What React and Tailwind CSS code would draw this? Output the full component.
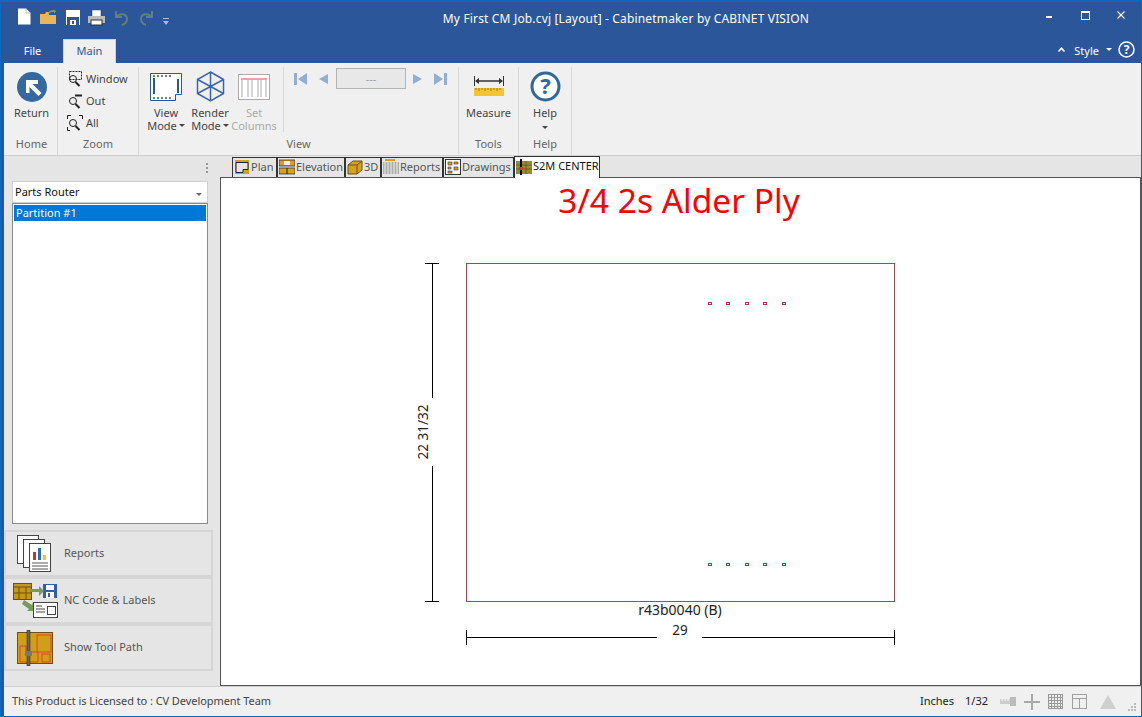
import React from 'react';

const font = { fontFamily: '"Noto Sans", Tahoma, sans-serif' };

function Caret({ className = 'border-t-[#444]' }) {
  return <span className={`inline-block w-0 h-0 border-x-[3px] border-x-transparent border-t-[3px] ${className}`} />;
}

function QuickBar() {
  return (
    <div className="flex items-start self-start pl-[16px] pt-[6px] w-[180px]">
      <svg width="14" height="17" viewBox="0 0 14 17"><path d="M1 .5h8l4.500 4.500v11.500h-12.500z" fill="#fff" /><path d="M9 .5v4.500h4.500" fill="none" stroke="#bbb" /></svg>
      <svg width="18" height="17" viewBox="0 0 18 17" className="ml-[8px]"><path d="M1 16V6h5l1-2h3v3h7v9z" fill="#e9b659" /><path d="M9 5c1-2 3-3 6-3l-1-1 3 2-2 3V4c-2 0-4 0-5 2z" fill="#7ea06a" /></svg>
      <svg width="14" height="15" viewBox="0 0 14 15" className="ml-[9px] mt-[2px]"><rect width="14" height="15" fill="#fff" /><rect x="1" y="7" width="12" height="8" fill="#2b579a" /><rect x="4" y="10" width="6" height="5" fill="#fff" /><rect x="6" y="11" width="2" height="3" fill="#2b579a" /></svg>
      <svg width="17" height="16" viewBox="0 0 17 16" className="ml-[8px] mt-[2px]"><rect x="4" y="0" width="9" height="7" fill="#fff" stroke="#333" strokeWidth=".5" /><rect y="6" width="17" height="7" fill="#bbb" /><rect x="3" y="10" width="11" height="5" fill="#fff" stroke="#333" /></svg>
      <svg width="15" height="16" viewBox="0 0 15 16" fill="none" stroke="#5f8178" strokeWidth="2" className="ml-[9px] mt-[2px]"><path d="M3 7c2-4 10-4 10 2 0 3-2 5-5 6" /><path d="M2 1v6h6" /></svg>
      <svg width="15" height="16" viewBox="0 0 15 16" fill="none" stroke="#5f8178" strokeWidth="2" className="ml-[10px] mt-[2px]"><path d="M12 7C10 3 2 3 2 9c0 3 2 5 5 6" /><path d="M13 1v6H7" /></svg>
      <svg width="6" height="7" viewBox="0 0 6 7" className="ml-[9px] mt-[10px]"><path d="M0 0h6v1H0zM0 3h6L3 7z" fill="#a9bcd8" /></svg>
    </div>
  );
}

function TitleBar() {
  return (
    <div className="h-[37px] flex shrink-0 text-white text-[12px] tracking-[0.16px]">
      <QuickBar />
      <div className="flex-1 text-center pt-[8px] pl-[40px]">My First CM Job.cvj [Layout] - Cabinetmaker by CABINET VISION</div>
      <div className="w-[110px] flex items-start justify-end pr-[2px]">
        <div className="w-[36px] h-[26px] flex items-center justify-center"><span className="w-[6px] h-[2px] bg-white mt-[4px]" /></div>
        <div className="w-[36px] h-[26px] flex items-center justify-center"><span className="w-[9px] h-[9px] border border-white border-t-2" /></div>
        <div className="w-[36px] h-[26px] flex items-center justify-center">
          <svg width="8" height="8" viewBox="0 0 8 8" stroke="#fff" strokeWidth="1.200"><path d="M.5.5l7 7M7.500.5l-7 7" /></svg>
        </div>
      </div>
    </div>
  );
}

function TabRow() {
  return (
    <div className="h-[24px] flex items-end shrink-0 text-[11px] text-white relative">
      <div className="w-[62px] h-[24px] flex items-center justify-center pl-[1px]">File</div>
      <div className="w-[53px] h-[24px] bg-[#f0f0f0] border-x border-t border-[#d2d2d2] text-[#2b579a] flex items-center justify-center">Main</div>
      <div className="flex-1" />
      <div className="flex items-start gap-[6px] pr-[6px] pb-[4px]">
        <svg width="7" height="5" viewBox="0 0 7 5" className="mt-[6px]"><path d="M3.500 0L7 4 6 5 3.500 2.500 1 5 0 4z" fill="#fff" /></svg>
        <span className="mt-[2px] ml-[3px]">Style</span>
        <span className="-mt-[2px] ml-[1px]"><Caret className="border-t-white" /></span>
        <svg width="17" height="17" viewBox="0 0 17 17"><circle cx="8.500" cy="8.500" r="7.500" fill="#2b579a" stroke="#fff" strokeWidth="1.600" /><text x="8.500" y="13" textAnchor="middle" fontSize="12" fontWeight="700" fill="#fff" fontFamily="Noto Sans">?</text></svg>
      </div>
    </div>
  );
}

function Group({ label, width, children }) {
  return (
    <div className="h-[88px] pb-[3px] flex flex-col border-r border-[#d8d8d8] mt-[4px] shrink-0" style={{ width }}>
      <div className="flex-1 flex">{children}</div>
      <div className="h-[16px] text-center text-[11px] text-[#666] leading-[15px]">{label}</div>
    </div>
  );
}

function LargeBtn({ icon, lines, caret, disabled, width = 'w-[44px]' }) {
  return (
    <div className={`${width} flex flex-col items-center pt-[1px] text-[11px] leading-[13px] ${disabled ? 'text-[#aaaaaa]' : 'text-[#444]'}`}>
      <div className="h-[37px] flex items-center justify-center">{icon}</div>
      <div className="text-center mt-[1px] whitespace-nowrap">{lines[0]}</div>
      {lines[1] && <div className="text-center whitespace-nowrap flex items-center gap-[2px]">{lines[1]}{caret && <Caret />}</div>}
      {!lines[1] && caret && <div className="mt-[2px] leading-[8px]"><Caret /></div>}
    </div>
  );
}

function ZoomGlass({ frame }) {
  return (
    <svg width="16" height="16" viewBox="0 0 16 16" fill="none" stroke="#222">
      {frame}
      <circle cx="6" cy="8" r="3.500" strokeWidth="1" />
      <path d="M8.500 11l4 4" strokeWidth="2" />
    </svg>
  );
}

function ZoomRow({ label, frame }) {
  return (
    <div className="flex items-center h-[22px] gap-[3px] text-[11px] text-[#444]">
      <ZoomGlass frame={frame} />
      <span>{label}</span>
    </div>
  );
}

function Ribbon() {
  const blue = '#2b579a';
  return (
    <div className="h-[93px] bg-[#f0f0f0] flex pl-[2px] border-b border-[#d0d0d0] shrink-0 ml-[3px]">
      <Group label="Home" width={52}>
        <LargeBtn width="w-[51px]" lines={['Return']} icon={
          <svg width="30" height="30" viewBox="0 0 30 30"><circle cx="15" cy="15" r="15" fill="#33699f" /><path d="M9 8h12v4h-5.500l9 9-3 3-9-9v6H9z" fill="#fff" /></svg>
        } />
      </Group>
      <Group label="Zoom" width={81}>
        <div className="pl-[9px] pt-[1px] flex flex-col">
          <ZoomRow label="Window" frame={<rect x="2.500" y=".5" width="12" height="8" strokeDasharray="2 1" />} />
          <ZoomRow label="Out" frame={<path d="M8 2.500h7" strokeWidth="2" />} />
          <ZoomRow label="All" frame={<path d="M4 .5H.5V4M12 .5h3.500V4M.5 12v3.500H3" />} />
        </div>
      </Group>
      <Group label="View" width={320}>
        <div className="flex pl-[5px] w-[145px] h-[65px] border-r border-[#d8d8d8]">
          <LargeBtn lines={['View', 'Mode']} caret icon={
            <svg width="32" height="28" viewBox="0 0 32 28"><path d="M.5.5h31v21h-6v6H.5z" fill="#fff" stroke={blue} /><path d="M4 5v16M28 6v14" stroke={blue} strokeWidth="2" /><path d="M3 3h18M3 25h18" stroke={blue} strokeWidth="1.500" strokeDasharray="2 2" /></svg>
          } />
          <LargeBtn lines={['Render', 'Mode']} caret icon={
            <svg width="29" height="31" viewBox="0 0 29 31" fill="none" stroke="#3b64a8" strokeWidth="1.500"><path d="M14.500 1l13 7.500v14l-13 7.500-13-7.500v-14z" /><path d="M14.500 1v29M1.500 8.500l26 14M27.500 8.500l-26 14" /></svg>
          } />
          <LargeBtn lines={['Set', 'Columns']} disabled icon={
            <svg width="32" height="26" viewBox="0 0 32 26" fill="none" stroke="#aaa"><rect x=".5" y=".5" width="31" height="25" fill="#fff" /><path d="M3 5h26" stroke="#e2a79c" strokeWidth="2" /><path d="M4 6v17M10 6v17M14 6v17M20 6v17M23 6v17M28 6v17" /></svg>
          } />
        </div>
        <div className="flex items-start pl-[10px] pt-[1px]">
          <svg width="13" height="12" viewBox="0 0 13 12" fill="#92aed4" className="mt-[5px]"><path d="M0 0h3v12H0zM13 0v12L4 6z" /></svg>
          <svg width="9" height="10" viewBox="0 0 9 10" fill="#92aed4" className="mt-[6px] ml-[12px]"><path d="M9 0v10L0 5z" /></svg>
          <div className="w-[70px] h-[21px] bg-[#e8e8e8] border border-[#b4b4b4] text-[#a0a0a0] text-[11px] text-center leading-[19px] ml-[8px]">---</div>
          <svg width="9" height="10" viewBox="0 0 9 10" fill="#92aed4" className="mt-[6px] ml-[7px]"><path d="M0 0v10l9-5z" /></svg>
          <svg width="13" height="12" viewBox="0 0 13 12" fill="#92aed4" className="mt-[5px] ml-[12px]"><path d="M13 0h-3v12h3zM0 0v12l9-6z" /></svg>
        </div>
      </Group>
      <Group label="Tools" width={60}>
        <LargeBtn width="w-[59px]" lines={['Measure']} icon={
          <svg width="30" height="21" viewBox="0 0 30 21"><path d="M.5 0v10M29.500 0v10" stroke="#333" /><path d="M3 5h24" stroke="#333" strokeWidth="1.500" /><path d="M1 5l4-3v6zM29 5l-4-3v6z" fill="#333" /><rect y="12" width="30" height="8" fill="#f5c433" /><path d="M2 12v2M5 12v3M8 12v2M11 12v3M14 12v2M17 12v3M20 12v2M23 12v3M26 12v2" stroke="#9a7a10" /></svg>
        } />
      </Group>
      <Group label="Help" width={53}>
        <LargeBtn width="w-[52px]" lines={['Help']} caret icon={
          <svg width="31" height="31" viewBox="0 0 31 31"><circle cx="15.500" cy="15.500" r="13.500" fill="#fff" stroke="#2f679f" strokeWidth="3" /><text x="15.500" y="23" textAnchor="middle" fontSize="22" fontWeight="700" fill="#2f679f" fontFamily="Noto Sans">?</text></svg>
        } />
      </Group>
    </div>
  );
}

const tabIconBase = 'w-[16px] h-[16px] shrink-0';

const tabs = [
  { label: 'Plan', width: 'w-[45px]', icon: (
    <svg className={tabIconBase} viewBox="0 0 16 16" fill="none"><rect x="1" y="1" width="14" height="14" fill="#d6a21d" /><path d="M2 3.500h12v7H9v3H2z" fill="#e5e5e5" stroke="#222" /></svg>
  ) },
  { label: 'Elevation', width: 'w-[68px]', icon: (
    <svg className={tabIconBase} viewBox="0 0 16 16"><rect y="1" width="16" height="6" fill="#d6a21d" stroke="#222" strokeWidth=".7" /><rect x="5" y="2" width="6" height="4" fill="#eee" /><rect y="9" width="16" height="6" fill="#d6a21d" stroke="#222" strokeWidth=".7" /><path d="M8 9v6" stroke="#222" /></svg>
  ) },
  { label: '3D', width: 'w-[36px]', icon: (
    <svg className={tabIconBase} viewBox="0 0 16 16"><path d="M1 6l5-4h9v9l-5 4H1z" fill="#d6a21d" stroke="#6b5210" /><path d="M1 6h9v9M10 6l5-4" fill="none" stroke="#6b5210" /></svg>
  ) },
  { label: 'Reports', width: 'w-[62px]', icon: (
    <svg className={tabIconBase} viewBox="0 0 16 16"><rect x="2" y="0" width="10" height="2" fill="#d6a21d" /><path d="M0 4h16M0 6h16M0 8h16M0 10h16M0 12h16M0 14h16" stroke="#777" /><path d="M2 3v12M5 3v12M8 3v12M11 3v12M14 3v12" stroke="#eee" /></svg>
  ) },
  { label: 'Drawings', width: 'w-[71px]', icon: (
    <svg className={tabIconBase} viewBox="0 0 16 16"><rect x=".5" y=".5" width="15" height="15" fill="#fff" stroke="#333" /><rect x="3" y="3" width="4" height="3" fill="#d6a21d" stroke="#333" strokeWidth=".6" /><rect x="9" y="3" width="4" height="2" fill="#d6a21d" stroke="#333" strokeWidth=".6" /><rect x="3" y="8" width="3" height="2" fill="#d6a21d" stroke="#333" strokeWidth=".6" /><rect x="3" y="12" width="4" height="2" fill="#d6a21d" stroke="#333" strokeWidth=".6" /><rect x="9" y="8" width="4" height="3" fill="#d6a21d" stroke="#333" strokeWidth=".6" /></svg>
  ) },
];

function ViewTabs() {
  return (
    <div className="h-[22px] flex items-end pl-[12px] shrink-0 text-[11px]">
      {tabs.map((t) => (
        <div key={t.label} className={`${t.width} h-[21px] pb-[2px] shrink-0 bg-[#e5e5e5] border-x border-t border-[#333] flex items-center gap-[1px] text-[#555] whitespace-nowrap pl-[1px] overflow-hidden`}>
          {t.icon}
          <span>{t.label}</span>
        </div>
      ))}
      <div className="w-[86px] h-[22px] pb-[2px] bg-white border-x border-t border-[#333] flex items-center gap-[1px] text-[#111] whitespace-nowrap pl-[1px] relative z-10">
        <svg className={tabIconBase} viewBox="0 0 16 16"><rect y="2" width="16" height="13" fill="#9b8a2c" /><path d="M0 6h16M0 10h16M5 2v13M10 2v13" stroke="#444" strokeWidth=".6" /><path d="M5 0v16" stroke="#000" strokeWidth="2" /><rect x="3" y="8" width="4" height="3" fill="#d33" /></svg>
        <span>S2M CENTER</span>
      </div>
    </div>
  );
}

function Drawing() {
  const holes = [708, 726, 745, 763, 782];
  return (
    <svg className="block" width="919" height="507" viewBox="221 178 919 507" fontFamily="Noto Sans">
      <text x="679" y="213" textAnchor="middle" fontSize="33.500" fill="#ff0000">3/4 2s Alder Ply</text>
      <rect x="466.500" y="263.500" width="428" height="338" fill="none" stroke="#a04a50" />
      {holes.map((x) => (
        <g key={x} fill="none" stroke="#a5383f">
          <rect x={x + 0.5} y="302.500" width="3" height="2" />
          <rect x={x + 0.5} y="563.500" width="3" height="2" />
        </g>
      ))}
      <g stroke="#000" fill="none">
        <path d="M425 263.500h14M425 601.500h14M432.500 264v134M432.500 466v135" />
        <path d="M466.500 630v15M894.500 630v15M467 637.500h190M702 637.500h192" />
      </g>
      <text transform="translate(428 432) rotate(-90)" textAnchor="middle" fontSize="13.500" fill="#222">22 31/32</text>
      <text x="680" y="615" textAnchor="middle" fontSize="14" fill="#222">r43b0040 (B)</text>
      <text x="680" y="635" textAnchor="middle" fontSize="13.500" fill="#222">29</text>
    </svg>
  );
}

const sideButtons = [
  { label: 'Reports', icon: (
    <svg width="36" height="38" viewBox="0 0 36 38">
      <rect x=".5" y=".5" width="21" height="28" fill="#fff" stroke="#444" />
      <rect x="6.500" y="4.500" width="21" height="28" fill="#fff" stroke="#444" />
      <rect x="12.500" y="8.500" width="21" height="28" fill="#fff" stroke="#444" />
      <rect x="16" y="17" width="3" height="8" fill="#c0392b" /><rect x="21" y="13" width="3" height="12" fill="#2b6cb0" /><rect x="26" y="20" width="3" height="5" fill="#f5c433" />
      <path d="M15 28h16M15 31h16M15 34h16" stroke="#555" />
    </svg>
  ) },
  { label: 'NC Code & Labels', icon: (
    <svg width="45" height="36" viewBox="0 0 45 36">
      <rect x=".5" y=".5" width="18" height="16" fill="#c8961a" stroke="#6b5210" />
      <path d="M0 4h18M0 10h18M6 4v13M13 4v13" stroke="#6b5210" fill="none" />
      <rect x="30" y="1" width="14" height="14" fill="#2f5fa5" /><rect x="33" y="2" width="8" height="5" fill="#fff" /><rect x="33" y="9" width="8" height="6" fill="#fff" /><rect x="35" y="10" width="2" height="4" fill="#2f5fa5" />
      <path d="M17 6h9V3l5 5-5 5V9h-9z" fill="#7a9a5c" />
      <path d="M11 17l8 5 1-3 3 9-9 0 2-2-7-5z" fill="#7a9a5c" />
      <rect x="20.500" y="19.500" width="24" height="15" fill="#fff" stroke="#444" />
      <path d="M23 23h6M23 26h9M23 29h9" stroke="#444" /><rect x="34.500" y="23.500" width="8" height="8" fill="#fff" stroke="#444" />
    </svg>
  ) },
  { label: 'Show Tool Path', icon: (
    <svg width="36" height="36" viewBox="0 0 36 36">
      <rect x=".5" y="2.500" width="35" height="31" fill="#d09f17" stroke="#6b5210" />
      <rect x="20" y="5" width="14" height="17" fill="none" stroke="#dd4433" />
      <rect x="25" y="24" width="8" height="8" fill="none" stroke="#dd4433" />
      <path d="M3 16h6v6h12v10H3z" fill="none" stroke="#dd4433" />
      <rect x="10" y="0" width="3" height="36" fill="#666" stroke="#222" strokeWidth=".5" />
      <rect x="8" y="21" width="7" height="5" fill="#777" />
    </svg>
  ) },
];

function Sidebar() {
  return (
    <div className="w-[210px] shrink-0 bg-[#e5e5e5] flex flex-col">
      <div className="h-[25px] flex justify-end pr-[6px] pt-[7px]">
        <div className="flex flex-col gap-[2px]">
          <span className="w-[2px] h-[2px] bg-[#999]" /><span className="w-[2px] h-[2px] bg-[#999]" /><span className="w-[2px] h-[2px] bg-[#999]" />
        </div>
      </div>
      <div className="ml-[8px] w-[196px] h-[22px] bg-white border border-[#d0d0d0] flex items-center justify-between px-[2px] text-[11px] text-[#111] shrink-0">
        <span>Parts Router</span>
        <span className="pr-[3px]"><Caret className="border-t-[#666]" /></span>
      </div>
      <div className="ml-[8px] w-[196px] h-[321px] bg-white border border-[#8a8a8a] p-[1px] text-[11px] shrink-0">
        <div className="h-[16px] bg-[#0078d7] text-white pl-[2px] leading-[16px]">Partition #1</div>
      </div>
      <div className="mt-[6px] flex flex-col">
        {sideButtons.map((b) => (
          <div key={b.label} className="h-[47px] w-[209px] border-2 border-[#d6d6d6] flex items-center text-[11px] text-[#555] bg-[#e5e5e5]">
            <div className="w-[58px] flex justify-center shrink-0">{b.icon}</div>
            <span>{b.label}</span>
          </div>
        ))}
      </div>
    </div>
  );
}

function StatusBar() {
  return (
    <div className="h-[30px] bg-[#f0f0f0] border-t border-[#d0d0d0] flex items-center text-[11px] text-[#444] shrink-0 ml-[3px] pl-[8px] pr-[5px]">
      <span className="tracking-[-0.06px]">This Product is Licensed to : CV Development Team</span>
      <div className="flex-1" />
      <span className="text-[#222]">Inches</span>
      <span className="text-[#222] ml-[11px]">1/32</span>
      <svg width="16" height="9" viewBox="0 0 16 9" className="ml-[12px]"><rect y="2" width="11" height="5" fill="#ccc" /><rect x="10" width="6" height="9" fill="#bbb" /><path d="M2 2v2M5 2v2M8 2v2" stroke="#fff" /></svg>
      <svg width="16" height="16" viewBox="0 0 16 16" className="ml-[8px]"><path d="M7 0h2v7h7v2H9v7H7V9H0V7h7z" fill="#a8a8a8" /></svg>
      <svg width="15" height="15" viewBox="0 0 15 15" className="ml-[8px]" fill="none" stroke="#999"><path d="M.5 0v15M3.500 0v15M6.500 0v15M9.500 0v15M12.500 0v15M14.500 0v15M0 .5h15M0 3.500h15M0 6.500h15M0 9.500h15M0 12.500h15M0 14.500h15" /></svg>
      <svg width="15" height="15" viewBox="0 0 15 15" className="ml-[9px]" fill="none" stroke="#a0a0a0"><rect x=".5" y=".5" width="14" height="14" /><path d="M0 4.500h15M7.500 4v11" /></svg>
      <svg width="16" height="14" viewBox="0 0 16 14" className="ml-[13px]"><path d="M8 0l8 14H0z" fill="#cfcfcf" /></svg>
      <svg width="8" height="8" viewBox="0 0 8 8" className="ml-[12px] mt-[10px]" fill="#bbb"><rect x="6" y="0" width="2" height="2" /><rect x="3" y="3" width="2" height="2" /><rect x="6" y="3" width="2" height="2" /><rect x="0" y="6" width="2" height="2" /><rect x="3" y="6" width="2" height="2" /><rect x="6" y="6" width="2" height="2" /></svg>
    </div>
  );
}

export default function App() {
  return (
    <div className="w-[1142px] h-[717px] bg-[#2b579a] border-x border-b border-[#0a6ac0] border-t-2 border-t-[#0a6ac0] flex flex-col overflow-hidden" style={font}>
      <TitleBar />
      <TabRow />
      <Ribbon />
      <div className="flex-1 flex min-h-0 ml-[3px] bg-[#d9d9d9]">
        <Sidebar />
        <div className="flex-1 flex flex-col min-w-0 pl-[6px] bg-[#e5e5e5]">
          <ViewTabs />
          <div className="flex-1 bg-white border border-[#555] -mt-[1px] min-h-0 overflow-hidden"><Drawing /></div>
        </div>
      </div>
      <StatusBar />
    </div>
  );
}
